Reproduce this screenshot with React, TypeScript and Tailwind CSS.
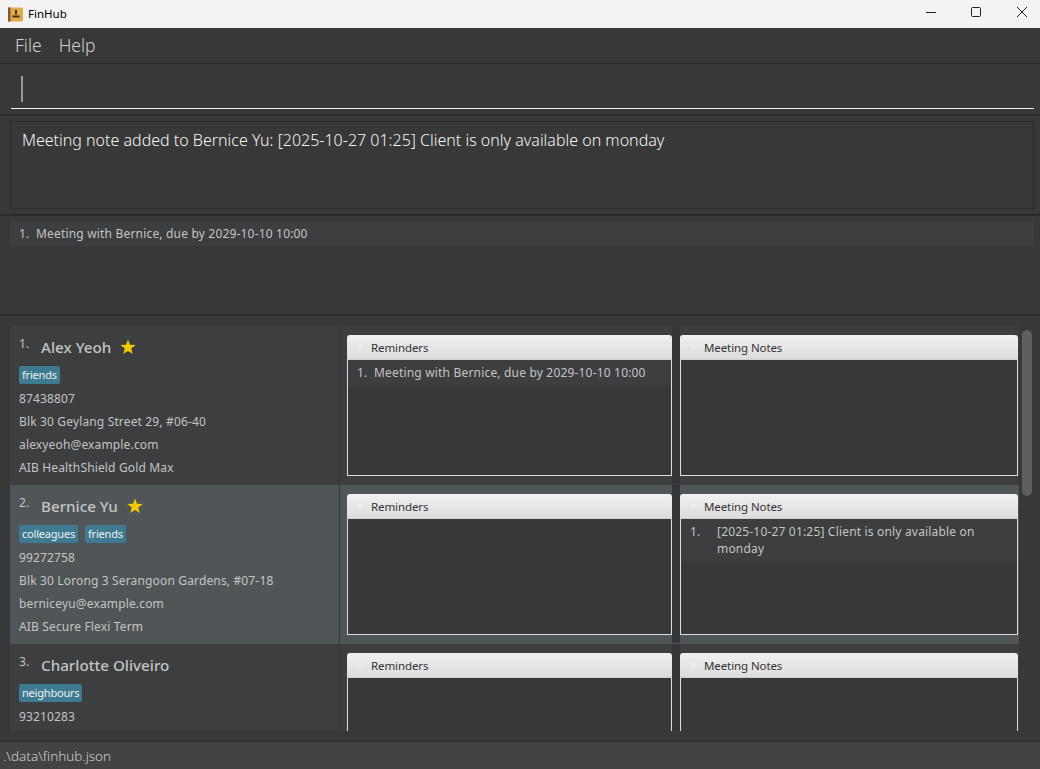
import React from 'react';

const FONT = "font-['Noto_Sans','Open_Sans',sans-serif]";

interface Person {
  index: number;
  name: string;
  starred: boolean;
  tags: string[];
  details: string[];
  selected?: boolean;
  reminders: string[];
  notes: string[];
}

const people: Person[] = [
  {
    index: 1,
    name: 'Alex Yeoh',
    starred: true,
    tags: ['friends'],
    details: ['87438807', 'Blk 30 Geylang Street 29, #06-40', 'alexyeoh@example.com', 'AIB HealthShield Gold Max'],
    reminders: ['Meeting with Bernice, due by 2029-10-10 10:00'],
    notes: [],
  },
  {
    index: 2,
    name: 'Bernice Yu',
    starred: true,
    tags: ['colleagues', 'friends'],
    details: ['99272758', 'Blk 30 Lorong 3 Serangoon Gardens, #07-18', 'berniceyu@example.com', 'AIB Secure Flexi Term'],
    selected: true,
    reminders: [],
    notes: ['[2025-10-27 01:25] Client is only available on monday'],
  },
  {
    // rest of this card is below the fold
    index: 3,
    name: 'Charlotte Oliveiro',
    starred: false,
    tags: ['neighbours'],
    details: ['93210283'],
    reminders: [],
    notes: [],
  },
];

function Star() {
  return (
    <svg width="16" height="16" viewBox="0 0 16 16" className="ml-[9px] shrink-0">
      <path d="M8 0.5 L10 5.8 L15.7 6 L11.2 9.5 L12.8 15 L8 11.9 L3.2 15 L4.8 9.5 L0.3 6 L6 5.8 Z" fill="#f2cb05" />
    </svg>
  );
}

function Panel({ title, items, wide }: { title: string; items: string[]; wide?: boolean }) {
  return (
    <div className={`h-[141px] flex flex-col shrink-0 ${wide ? 'w-[338px]' : 'w-[325px]'}`}>
      <div className="h-[25px] shrink-0 flex items-center rounded-t-[3px] border-b border-[#cfcfcf] bg-gradient-to-b from-[#f1f1f1] to-[#dcdcdc] relative">
        <div className="ml-[9px] w-0 h-0 border-x-[4px] border-x-transparent border-t-[5px] border-t-[#ececec]" />
        <span className="ml-[7px] pt-[2px] text-[11.5px] tracking-[-0.1px] text-[#333333] leading-none">{title}</span>
      </div>
      <div className="flex-1 bg-[#383838] border border-t-0 border-[#dddddd] overflow-hidden">
        {items.map((item, i) => (
          <div key={item} className="flex bg-[#3c3e3f] px-[9px] py-[4px] text-[12px] tracking-[0.18px] leading-[17px] text-[#c4c4c4]">
            <span className={`shrink-0 ${wide ? 'w-[27px]' : 'w-[17px]'}`}>{i + 1}.</span>
            <span>{item}</span>
          </div>
        ))}
      </div>
    </div>
  );
}

function PersonRow({ person }: { person: Person }) {
  const bg = person.selected ? 'bg-[#505657]' : 'bg-[#3c3e3f]';
  return (
    <div className={`flex h-[159px] shrink-0 ${bg}`}>
      <div className="w-[329px] shrink-0 pl-[9px] pt-[9px] flex flex-col">
        <div className="flex items-center h-[24px]">
          <span className="text-[12px] text-[#c4c4c4] w-[22px] -mt-[7px]">{person.index}.</span>
          <span className="text-[15.2px] font-medium pt-[2px] text-[#c4c4c4] leading-none">{person.name}</span>
          {person.starred && <Star />}
        </div>
        <div className="flex gap-[7px] mt-[7px] h-[18px]">
          {person.tags.map((tag) => (
            <span key={tag} className="bg-[#3e7b91] text-[#f0f0f0] text-[11px] tracking-[-0.2px] leading-[18px] px-[3px] rounded-[2px]">
              {tag}
            </span>
          ))}
        </div>
        <div className="mt-[3px] text-[12px] tracking-[0.15px] leading-[23px] text-[#c4c4c4]">
          {person.details.map((line) => (
            <div key={line}>{line}</div>
          ))}
        </div>
      </div>
      <div className="w-[8px] shrink-0 border-l border-[#353637] mb-px" />
      <div className="flex pt-[9px]">
        <Panel title="Reminders" items={person.reminders} />
        <div className="w-[8px] -mt-[9px] mb-px bg-[#343535]" />
        <Panel title="Meeting Notes" items={person.notes} wide />
      </div>
    </div>
  );
}

export default function App() {
  return (
    <div className={`w-[1040px] h-[769px] flex flex-col overflow-hidden bg-[#383838] ${FONT}`}>
      {/* window title bar */}
      <div className="h-[28px] shrink-0 bg-[#f3f3f3] flex items-center justify-between">
        <div className="flex items-center pl-[8px]">
          <svg width="15" height="15" viewBox="0 0 15 15">
            <rect x="0" y="0.5" width="15" height="14" rx="1" fill="#e0a94e" />
            <rect x="0" y="0.5" width="2.5" height="14" fill="#7d5a2c" />
            <path d="M7 3h2v4.5h-2z M4.5 8.5h7v2h-7z" fill="#4a3315" />
          </svg>
          <span className="ml-[5px] text-[11.5px] text-black leading-none">FinHub</span>
        </div>
        <div className="flex items-center">
          <svg width="46" height="28" viewBox="0 0 46 28">
            <path d="M24 12.5h10" stroke="#222" strokeWidth="1" />
          </svg>
          <svg width="46" height="28" viewBox="0 0 46 28">
            <rect x="23.5" y="7.5" width="9" height="9" rx="1" fill="none" stroke="#222" strokeWidth="1" />
          </svg>
          <svg width="46" height="28" viewBox="0 0 46 28">
            <path d="M23 7l10 10M33 7l-10 10" stroke="#222" strokeWidth="1" />
          </svg>
        </div>
      </div>

      {/* menu bar */}
      <div className="h-[36px] shrink-0 flex items-center pl-[15px] gap-[17px] border-b border-[#2b2b2b] text-[17.5px] font-light text-[#d0d0d0] leading-none">
        <span>File</span>
        <span>Help</span>
      </div>

      {/* command box */}
      <div className="h-[52px] shrink-0 pl-[11px] pr-[6px] border-b-2 border-[#2b2b2b] pt-[12px]">
        <div className="h-[33px] border-b border-[#f0f0f0] pl-[10px]">
          <div className="w-[2px] h-[26px] bg-[#9a9a9a]" />
        </div>
      </div>

      {/* result display */}
      <div className="h-[100px] shrink-0 pl-[10px] pr-[6px] py-[5px] border-b-2 border-[#2b2b2b]">
        <div className="h-[88px] border border-[#2b2b2b] px-[11px] pt-[8px] text-[16px] font-light leading-[20px] text-[#f5f5f5]">
          Meeting note added to Bernice Yu: [2025-10-27 01:25] Client is only available on monday
        </div>
      </div>

      {/* upcoming reminders */}
      <div className="h-[100px] shrink-0 pl-[10px] pr-[6px] pt-[5px] border-b-2 border-[#2b2b2b]">
        <div className="h-[25px] bg-[#3c3e3f] flex items-center pl-[9px] text-[12px] tracking-[0.18px] text-[#c4c4c4]">
          <span className="w-[17px]">1.</span>
          <span>Meeting with Bernice, due by 2029-10-10 10:00</span>
        </div>
      </div>

      {/* person list */}
      <div className="h-[425px] shrink-0 pl-[10px] pt-[10px] pb-[10px] flex relative">
        <div className="w-[1009px] shrink-0 overflow-hidden flex flex-col">
          {people.map((p) => (
            <PersonRow key={p.index} person={p} />
          ))}
        </div>
        <div className="absolute left-[1022px] top-[14px] w-[10px] h-[166px] rounded-[5px] bg-[#5f5f5f]" />
      </div>

      {/* status bar */}
      <div className="flex-1 bg-[#434343] border-t border-[#2b2b2b] flex items-center pl-[3px] pt-[3px] text-[13.5px] font-light leading-none text-[#d0d0d0]">
        .\data\finhub.json
      </div>
    </div>
  );
}
